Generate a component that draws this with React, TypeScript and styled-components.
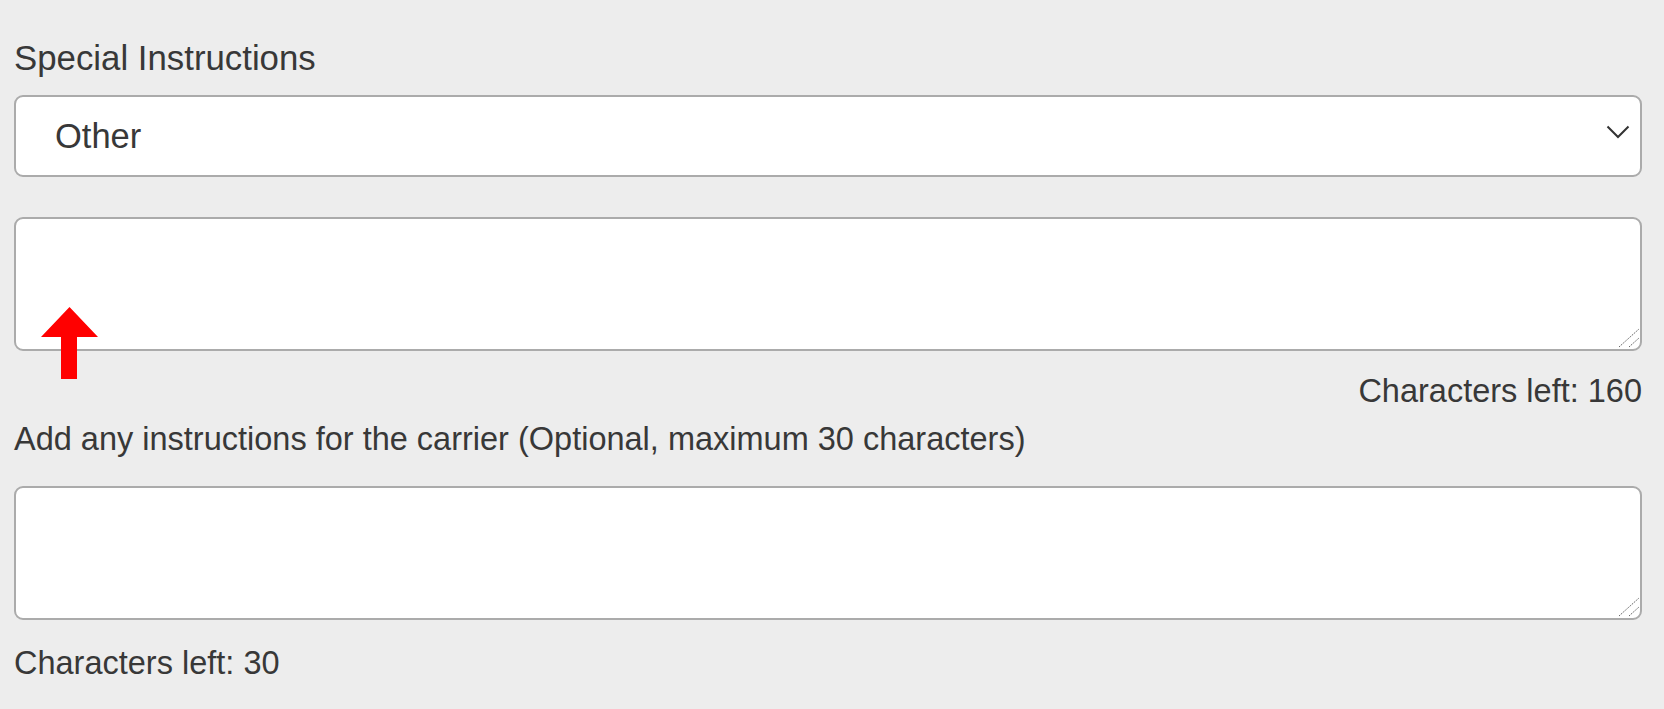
import React, { useState } from "react"
import styled, { createGlobalStyle } from "styled-components"

const GlobalStyle = createGlobalStyle`
html, body {
  margin: 0;
  padding: 0;
  background: #ededed;
}
body {
  font-family: "Liberation Sans", Arial, sans-serif;
  color: #383838;
}
`

const Page = styled.div`
display: flex;
flex-direction: column;
padding: 38px 22px 0 14px;
`

const Label = styled.label<{ $size?: number }>`
display: block;
font-size: ${(p) => p.$size ?? 32.5}px;
line-height: 1.15;
color: #383838;
`

const SelectWrap = styled.div`
position: relative;
margin-top: 17.4px;
`

const Select = styled.select`
appearance: none;
-webkit-appearance: none;
box-sizing: border-box;
width: 100%;
height: 82px;
padding: 0 60px 0 39px;
border: 2px solid #ababab;
border-radius: 9px;
background: #fff;
font-family: "Liberation Sans", Arial, sans-serif;
font-size: 34.5px;
color: #383838;
outline: none;
`

const Chevron = styled.svg`
position: absolute;
right: 12px;
top: 30px;
width: 24px;
height: 14px;
pointer-events: none;
`

const FieldWrap = styled.div<{ $gap: number }>`
position: relative;
margin-top: ${(p) => p.$gap}px;
`

const TextArea = styled.textarea`
display: block;
box-sizing: border-box;
width: 100%;
height: 134px;
margin: 0;
padding: 10px 14px;
border: 2px solid #ababab;
border-radius: 9px;
background: #fff;
font-family: "Liberation Sans", Arial, sans-serif;
font-size: 32px;
color: #383838;
resize: vertical;
outline: none;

&::-webkit-resizer {
  background: transparent;
}
`

const Grip = styled.svg`
position: absolute;
right: 2px;
bottom: 3px;
width: 22px;
height: 20px;
pointer-events: none;
`

const Arrow = styled.svg`
position: absolute;
left: 27px;
top: 90px;
width: 57px;
height: 72px;
`

const Counter = styled.div<{ $align?: string; $gap: number }>`
margin-top: ${(p) => p.$gap}px;
font-size: 32.5px;
line-height: 1.15;
text-align: ${(p) => p.$align ?? "left"};
color: #383838;
`

function ResizeGrip() {
    return (
        <Grip viewBox="0 0 22 20">
            <line x1="1" y1="19" x2="21" y2="1" stroke="#666" strokeWidth="1" strokeDasharray="1.5 1" />
            <line x1="11" y1="19" x2="21" y2="10" stroke="#666" strokeWidth="1" strokeDasharray="1.5 1" />
        </Grip>
    )
}

export default function App() {
    const [note, setNote] = useState("")
    const [carrier, setCarrier] = useState("")

    return (
        <>
            <GlobalStyle />
            <Page>
                <Label $size={34.8}>Special Instructions</Label>
                <SelectWrap>
                    <Select defaultValue="other">
                        <option value="other">Other</option>
                    </Select>
                    <Chevron viewBox="0 0 24 14">
                        <polyline points="1.5,1.5 12,12 22.5,1.5" fill="none" stroke="#333" strokeWidth="2" />
                    </Chevron>
                </SelectWrap>
                <FieldWrap $gap={40}>
                    <TextArea maxLength={160} value={note} onChange={(e) => setNote(e.target.value)} />
                    <ResizeGrip />
                    <Arrow viewBox="0 0 57 72">
                        <polygon points="28.5,0 57,30 36,30 36,72 20,72 20,30 0,30" fill="#ff0000" />
                    </Arrow>
                </FieldWrap>
                <Counter $align="right" $gap={21.2}>Characters left: {160 - note.length}</Counter>
                <Counter $gap={11}>Add any instructions for the carrier (Optional, maximum 30 characters)</Counter>
                <FieldWrap $gap={28}>
                    <TextArea maxLength={30} value={carrier} onChange={(e) => setCarrier(e.target.value)} />
                    <ResizeGrip />
                </FieldWrap>
                <Counter $gap={24.5}>Characters left: {30 - carrier.length}</Counter>
            </Page>
        </>
    )
}
